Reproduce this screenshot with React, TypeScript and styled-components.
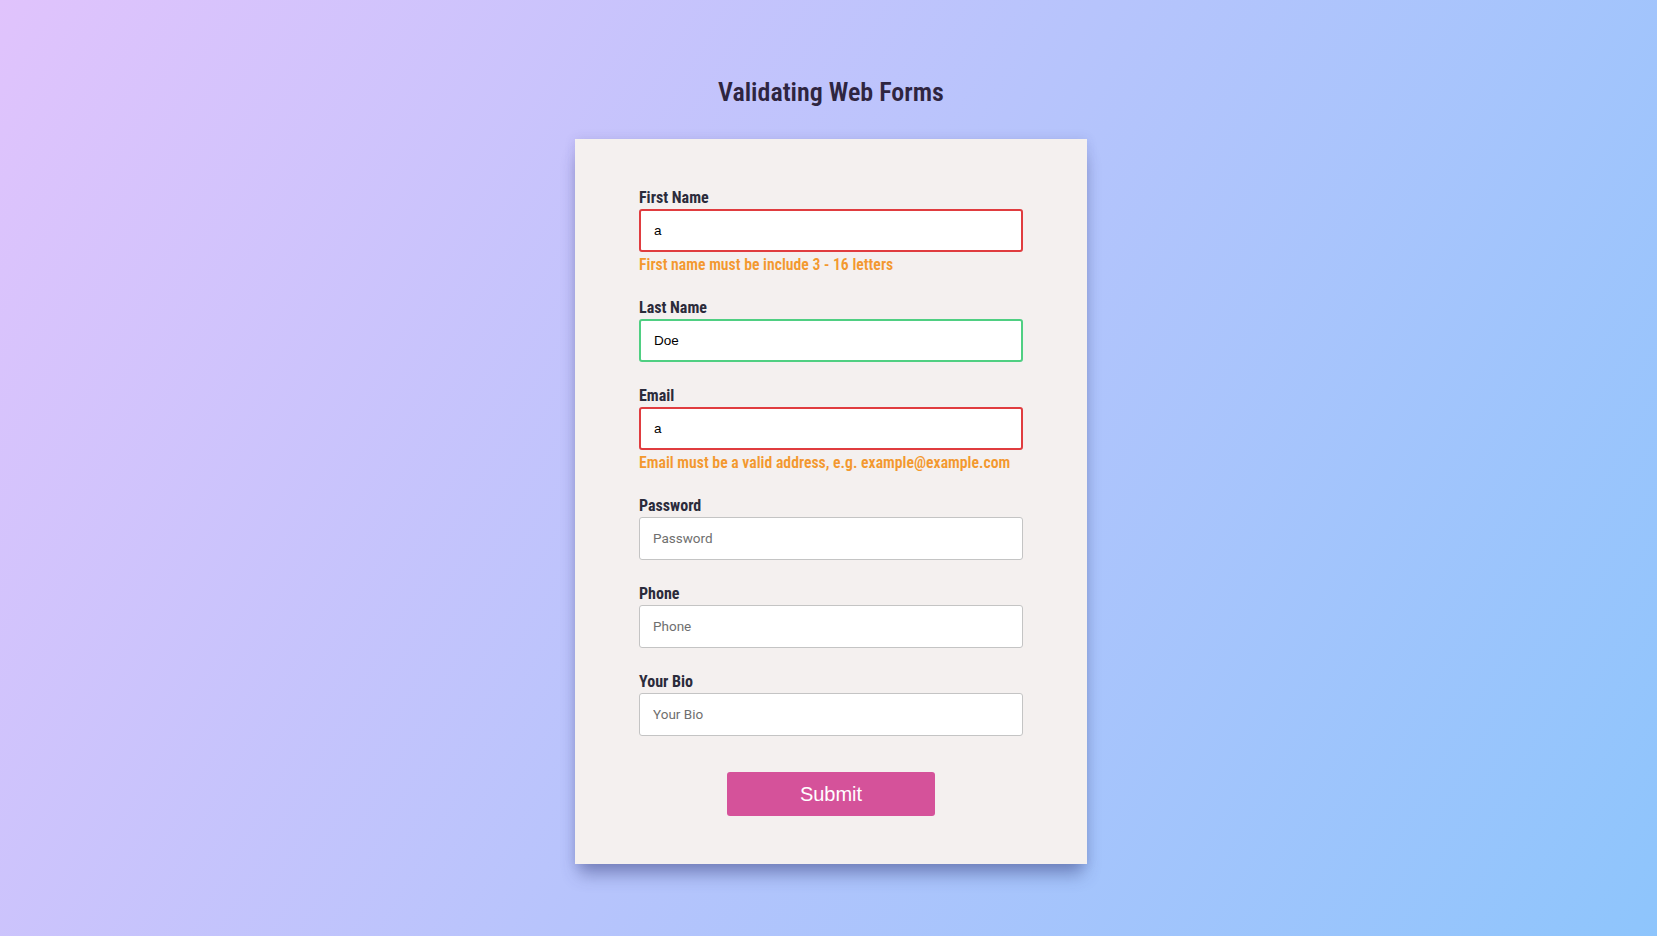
import React from "react";
import styled, { createGlobalStyle } from "styled-components";

const Global = createGlobalStyle`
  html, body { margin: 0; padding: 0; }
  body {
    min-height: 936px;
    background: linear-gradient(120deg, #e0c3fc 0%, #8ec5fc 100%);
    font-family: "Roboto Condensed", Roboto, "Liberation Sans", sans-serif;
  }
`;

const Page = styled.div`
  display: flex;
  flex-direction: column;
  align-items: center;
  padding: 76px 0 0 5px;
  height: 936px;
  box-sizing: border-box;
  overflow: hidden;
`;

const Title = styled.h1`
  margin: 0 0 31px;
  font-family: "Roboto Condensed", Roboto, sans-serif;
  font-size: 26px;
  line-height: 32px;
  font-weight: 600;
  color: #2e2540;
`;

const Card = styled.form`
  width: 512px;
  box-sizing: border-box;
  padding: 49px 64px 48px;
  background: #f4f0ef;
  box-shadow: 0 14px 16px -4px rgba(50, 60, 120, 0.45), 0 0 10px rgba(60, 60, 130, 0.15);
  display: flex;
  flex-direction: column;
`;

const Field = styled.div`
  display: flex;
  flex-direction: column;
  margin-bottom: 24px;
`;

const Label = styled.label`
  font-family: "Roboto Condensed", Roboto, sans-serif;
  font-size: 16px;
  line-height: 19px;
  font-weight: 700;
  color: #2b2b3b;
  margin-bottom: 2px;
`;

type State = "error" | "valid" | "idle";

const Input = styled.input<{ $state: State }>`
  height: 43px;
  box-sizing: border-box;
  width: 100%;
  padding: 0 13px;
  background: #fff;
  border-radius: 3px;
  outline: none;
  border: ${(p) =>
    p.$state === "error"
      ? "2px solid #e03c3f"
      : p.$state === "valid"
      ? "2px solid #4fcf82"
      : "1px solid #c4c4c4"};
  font-family: "Liberation Sans", Arial, sans-serif;
  font-size: 13.5px;
  color: #000;
  &::placeholder {
    font-family: Roboto, sans-serif;
    font-size: 13.5px;
    color: #6f6f6f;
  }
`;

const ErrorText = styled.div`
  font-family: "Roboto Condensed", Roboto, sans-serif;
  font-size: 15.75px;
  line-height: 19px;
  font-weight: 600;
  color: #f3982e;
  margin-top: 3px;
`;

const Submit = styled.button`
  align-self: center;
  width: 208px;
  height: 44px;
  margin-top: 12px;
  border: none;
  border-radius: 3px;
  background: #d5529a;
  color: #fff;
  font-family: "Liberation Sans", Arial, sans-serif;
  font-size: 20px;
`;

export default function App() {
  return (
    <>
      <Global />
      <Page>
        <Title>Validating Web Forms</Title>
        <Card onSubmit={(e) => e.preventDefault()}>
          <Field>
            <Label>First Name</Label>
            <Input $state="error" defaultValue="a" placeholder="First Name" />
            <ErrorText>First name must be include 3 - 16 letters</ErrorText>
          </Field>
          <Field>
            <Label>Last Name</Label>
            <Input $state="valid" defaultValue="Doe" placeholder="Last Name" />
          </Field>
          <Field>
            <Label>Email</Label>
            <Input $state="error" defaultValue="a" placeholder="Email" />
            <ErrorText>Email must be a valid address, e.g. example@example.com</ErrorText>
          </Field>
          <Field>
            <Label>Password</Label>
            <Input $state="idle" type="password" placeholder="Password" />
          </Field>
          <Field>
            <Label>Phone</Label>
            <Input $state="idle" placeholder="Phone" />
          </Field>
          <Field>
            <Label>Your Bio</Label>
            <Input $state="idle" placeholder="Your Bio" />
          </Field>
          <Submit type="submit">Submit</Submit>
        </Card>
      </Page>
    </>
  );
}
